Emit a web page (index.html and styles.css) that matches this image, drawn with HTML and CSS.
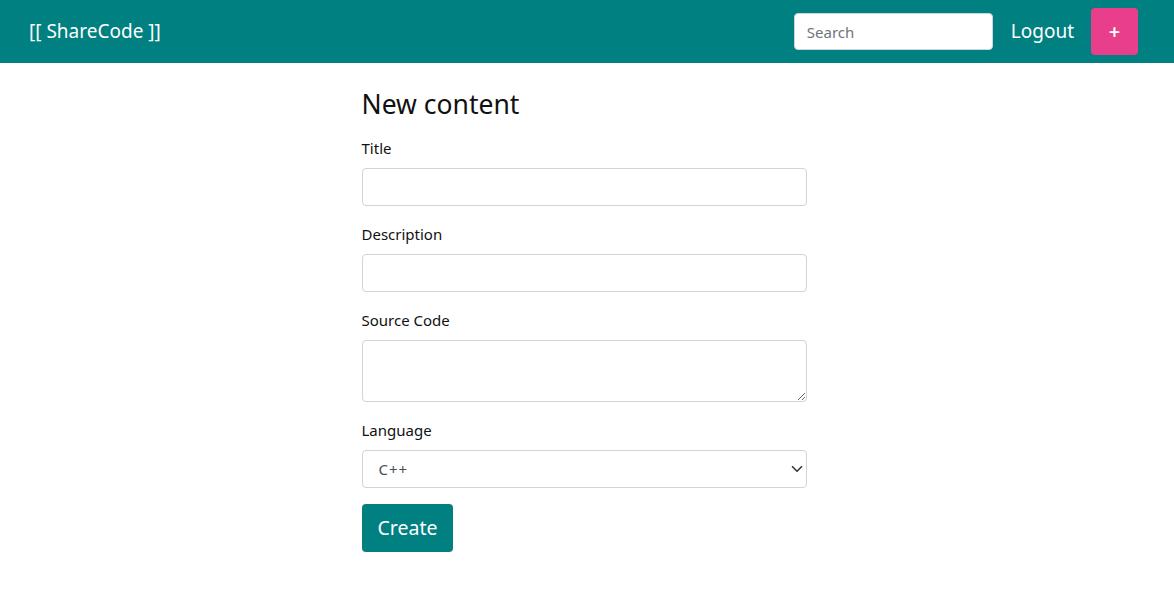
FILE: index.html
```html
<!DOCTYPE html>
<html lang="en">
<head>
<meta charset="utf-8">
<title>ShareCode</title>
<link rel="stylesheet" href="styles.css">
</head>
<body>
<nav class="navbar">
  <a class="brand" href="#">[[ ShareCode ]]</a>
  <div class="nav-right">
    <input class="search" type="text" placeholder="Search">
    <a class="logout" href="#">Logout</a>
    <button class="plus" type="button">+</button>
  </div>
</nav>
<main class="container">
  <h3 class="page-title">New content</h3>
  <form class="form">
    <div class="group">
      <label class="label">Title</label>
      <input class="control" type="text">
    </div>
    <div class="group">
      <label class="label">Description</label>
      <input class="control" type="text">
    </div>
    <div class="group">
      <label class="label">Source Code</label>
      <textarea class="control textarea"></textarea>
    </div>
    <div class="group">
      <label class="label">Language</label>
      <div class="select-wrap">
        <select class="control select">
          <option>C++</option>
          <option>Java</option>
          <option>Python</option>
        </select>
        <svg class="caret" width="12" height="12" viewBox="0 0 16 16"><path d="M2 5l6 6 6-6" fill="none" stroke="#343a40" stroke-width="2.2" stroke-linecap="round" stroke-linejoin="round"/></svg>
      </div>
    </div>
    <button class="create" type="button">Create</button>
  </form>
</main>
</body>
</html>
```
FILE: styles.css
```css
* { box-sizing: border-box; }
html, body { margin: 0; padding: 0; }
body {
  font-family: "Noto Sans", "Open Sans", sans-serif;
  font-size: 15px;
  line-height: 1.5;
  color: #212529;
  background: #fff;
}
.navbar {
  height: 63px;
  background: #008080;
  display: flex;
  align-items: center;
  justify-content: space-between;
  padding: 0 36px 0 29px;
}
.brand {
  color: #fff;
  text-decoration: none;
  font-size: 19px;
}
.nav-right {
  display: flex;
  align-items: center;
}
.search {
  width: 199px;
  height: 37px;
  border: 1px solid #ced4da;
  border-radius: 4px;
  padding: 0 12px;
  font-family: inherit;
  font-size: 15px;
  color: #495057;
  background: #fff;
}
.search::placeholder { color: #6c757d; }
.logout {
  color: #fff;
  text-decoration: none;
  font-size: 19px;
  margin: 0 17px 0 18px;
}
.plus {
  width: 47px;
  height: 47px;
  border: none;
  border-radius: 4px;
  background: #e83e8c;
  color: #fff;
  font-family: inherit;
  font-size: 20px;
  font-weight: 600;
  padding: 0;
  cursor: pointer;
}
.container {
  width: 445px;
  margin: 0 auto;
  padding-top: 26px;
  transform: translateX(-3px);
}
.page-title {
  margin: 0 0 15px;
  font-size: 26.5px;
  font-weight: 400;
  line-height: 1.2;
  color: #111;
}
.form { display: flex; flex-direction: column; }
.group {
  display: flex;
  flex-direction: column;
  margin-bottom: 16px;
}
.label {
  line-height: 24px;
  margin-bottom: 8px;
  color: #111;
}
.control {
  width: 100%;
  height: 38px;
  border: 1px solid #ced4da;
  border-radius: 4px;
  padding: 6px 12px;
  font-family: inherit;
  font-size: 15px;
  color: #495057;
  background: #fff;
}
.textarea {
  height: 62px;
  resize: vertical;
}
.select-wrap { position: relative; }
.select {
  appearance: none;
  -webkit-appearance: none;
  padding-left: 16px;
  letter-spacing: 1px;
}
.caret {
  position: absolute;
  right: 4px;
  top: 13px;
  pointer-events: none;
}
.create {
  align-self: flex-start;
  height: 48px;
  padding: 0 16px;
  border: none;
  border-radius: 4px;
  background: #008080;
  color: #fff;
  font-family: inherit;
  font-size: 19.5px;
  cursor: pointer;
}
```
